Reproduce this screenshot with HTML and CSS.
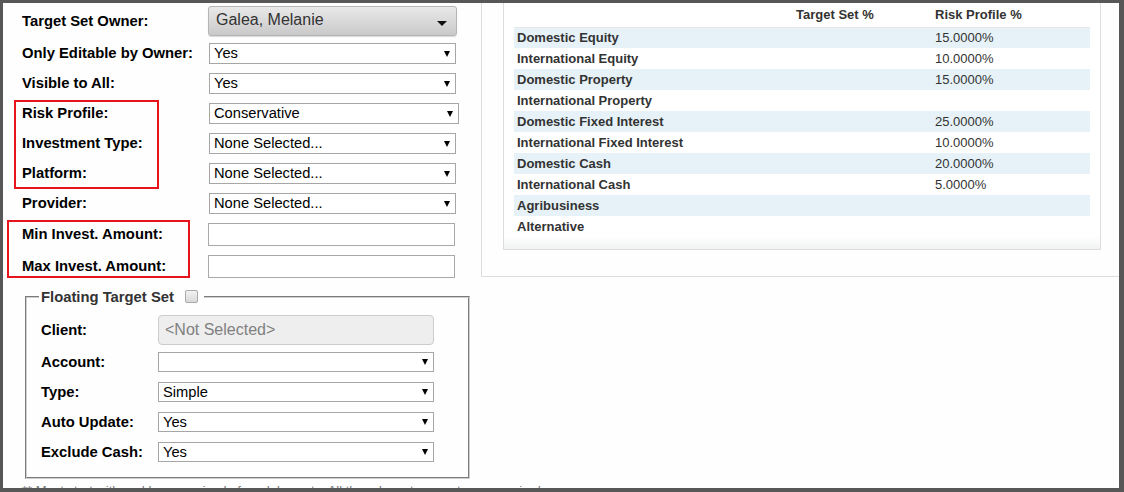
FILE: index.html
```html
<!DOCTYPE html>
<html lang="en">
<head>
    <meta charset="UTF-8">
    <title>Target Set</title>
    <link rel="stylesheet" href="styles.css">
</head>
<body>
    <div class="frame">
        <div class="left">
            <div class="row owner-row">
                <label>Target Set Owner:</label>
                <button class="owner">Galea, Melanie<span class="caret"></span></button>
            </div>
            <div class="row">
                <label>Only Editable by Owner:</label>
                <span class="sel"><select><option>Yes</option></select></span>
            </div>
            <div class="row">
                <label>Visible to All:</label>
                <span class="sel"><select><option>Yes</option></select></span>
            </div>
            <!-- highlighted fields -->
            <div class="mark mark-a">
                <div class="row">
                    <label>Risk Profile:</label>
                    <span class="sel wide"><select><option>Conservative</option></select></span>
                </div>
                <div class="row">
                    <label>Investment Type:</label>
                    <span class="sel"><select><option>None Selected...</option></select></span>
                </div>
                <div class="row">
                    <label>Platform:</label>
                    <span class="sel"><select><option>None Selected...</option></select></span>
                </div>
            </div>
            <div class="row">
                <label>Provider:</label>
                <span class="sel"><select><option>None Selected...</option></select></span>
            </div>
            <div class="mark mark-b">
                <div class="row tall">
                    <label>Min Invest. Amount:</label>
                    <input type="text" class="txt">
                </div>
                <div class="row tall">
                    <label>Max Invest. Amount:</label>
                    <input type="text" class="txt">
                </div>
            </div>

            <fieldset class="floating">
                <legend>Floating Target Set <input type="checkbox" class="chk"></legend>
                <div class="frow client-row">
                    <label>Client:</label>
                    <input type="text" class="client" placeholder="<Not Selected>" disabled>
                </div>
                <div class="frow">
                    <label>Account:</label>
                    <span class="sel fsel"><select><option></option></select></span>
                </div>
                <div class="frow">
                    <label>Type:</label>
                    <span class="sel fsel"><select><option>Simple</option></select></span>
                </div>
                <div class="frow">
                    <label>Auto Update:</label>
                    <span class="sel fsel"><select><option>Yes</option></select></span>
                </div>
                <div class="frow">
                    <label>Exclude Cash:</label>
                    <span class="sel fsel"><select><option>Yes</option></select></span>
                </div>
            </fieldset>
            <p class="note">** Must start with and be comprised of model assets. All the relevant amounts are required.</p>
        </div>

        <div class="right">
            <div class="grid-box">
                <table class="alloc">
                    <thead>
                        <tr><th></th><th>Target Set %</th><th>Risk Profile %</th></tr>
                    </thead>
                    <tbody>
                        <tr><td class="name">Domestic Equity</td><td></td><td>15.0000%</td></tr>
                        <tr><td class="name">International Equity</td><td></td><td>10.0000%</td></tr>
                        <tr><td class="name">Domestic Property</td><td></td><td>15.0000%</td></tr>
                        <tr><td class="name">International Property</td><td></td><td></td></tr>
                        <tr><td class="name">Domestic Fixed Interest</td><td></td><td>25.0000%</td></tr>
                        <tr><td class="name">International Fixed Interest</td><td></td><td>10.0000%</td></tr>
                        <tr><td class="name">Domestic Cash</td><td></td><td>20.0000%</td></tr>
                        <tr><td class="name">International Cash</td><td></td><td>5.0000%</td></tr>
                        <tr><td class="name">Agribusiness</td><td></td><td></td></tr>
                        <tr><td class="name">Alternative</td><td></td><td></td></tr>
                    </tbody>
                </table>
            </div>
        </div>
    </div>
</body>
</html>
```

FILE: styles.css
```css
*, *::before, *::after{box-sizing: border-box;}
body{margin: 0; font-family: "Liberation Sans", Arial, sans-serif; background: #fff;}

.frame{width: 1124px; height: 492px; border-style: solid; border-color: #575757; border-width: 3px 5px 4px 3px; display: flex; overflow: hidden; background: #fefefe;}

/* left form */
.left{width: 478px; flex: none;}
.row{display: flex; align-items: center; height: 30px; padding-left: 19px;}
.row label, .frow label{font-size: 14.8px; font-weight: bold; color: #000; flex: none;}
.row label{width: 187px;}
.owner-row{height: 35px;}
.row.tall{height: 32px;}

.owner{position: relative; width: 249px; height: 30px; margin-left: -1px; padding: 0 0 2px 7px; text-align: left;
    font-family: inherit; font-size: 16px; color: #333;
    border: 1px solid #b5b5b5; border-radius: 3px;
    background: linear-gradient(#e9e9e9, #c9c9c9); box-shadow: 0 1px 1px rgba(0,0,0,.15);}
.owner .caret{position: absolute; right: 9px; top: 14px; width: 0; height: 0; border-left: 5px solid transparent; border-right: 5px solid transparent; border-top: 5px solid #111;}

.sel{position: relative; display: inline-block; width: 247px; height: 21px;}
.sel.wide{width: 250px;}
.sel select{-webkit-appearance: none; appearance: none; width: 100%; height: 100%; margin: 0; padding: 0 0 0 4px;
    font-family: inherit; font-size: 14.7px; color: #000; background: #fff; border: 1px solid #a6a6a6; border-radius: 0;}
.sel::after{content: ""; position: absolute; right: 6px; top: 8px; width: 0; height: 0; border-left: 3px solid transparent; border-right: 3px solid transparent; border-top: 6px solid #000;}

.txt{width: 247px; height: 23px; margin-left: -1px; border: 1px solid #a9a9a9; background: #fff;}

/* red annotation boxes */
.mark{position: relative;}
.mark::before{content: ""; position: absolute; border: 2px solid #e8141c;}
.mark-a::before{left: 11px; top: 2px; width: 145px; height: 89px;}
.mark-b::before{left: 4px; top: 2px; width: 183px; height: 58px;}

/* floating target set */
.floating{width: 445px; margin: 7px 0 0 22px; padding: 8px 0 10px 12px; border: 2px groove #cfcfcf;}
.floating legend{padding: 0 6px 0 2px; font-size: 14.8px; font-weight: bold; color: #333;}
.chk{-webkit-appearance: none; appearance: none; width: 13px; height: 13px; margin: 0 0 0 7px; vertical-align: -1px;
    border: 1px solid #a9a9a9; border-radius: 2px; background: linear-gradient(#f2f2f2, #d9d9d9);}
.frow{display: flex; align-items: center; height: 30px; padding-left: 2px;}
.frow label{width: 117px;}
.client-row{height: 34px;}
.client{width: 276px; height: 30px; padding: 0 6px; font-family: inherit; font-size: 16px;
    background: #eee; border: 1px solid #ccc; border-radius: 4px;}
.client::placeholder{color: #808080;}
.fsel{width: 276px; height: 20px;}
.fsel::after{top: 7px;}

.note{margin: 4px 0 0 19px; font-size: 13px; line-height: 15px; color: #777; white-space: nowrap;}

/* right allocation panel */
.right{flex: 1; height: 274px; padding: 0 18px 0 21px; border-left: 1px solid #ddd; border-bottom: 1px solid #ddd;}
.grid-box{height: 247px; padding: 0 10px; border: 1px solid #ddd; border-top: 0;
    background: linear-gradient(#fff 234px, #f1f2f3);}
.alloc{width: 100%; border-collapse: collapse; font-size: 13px; color: #333;}
.alloc th{height: 24px; padding: 0 3px; text-align: left; font-weight: bold; border-bottom: 1px solid #e6e6e6;}
.alloc th:first-child{width: 279px;}
.alloc th:nth-child(2){width: 139px;}
.alloc td{height: 21px; padding: 0 3px; background: #fff;}
.alloc tbody tr:nth-child(odd) td{background: #e6f2f8;}
.alloc td.name{font-weight: bold;}
```
